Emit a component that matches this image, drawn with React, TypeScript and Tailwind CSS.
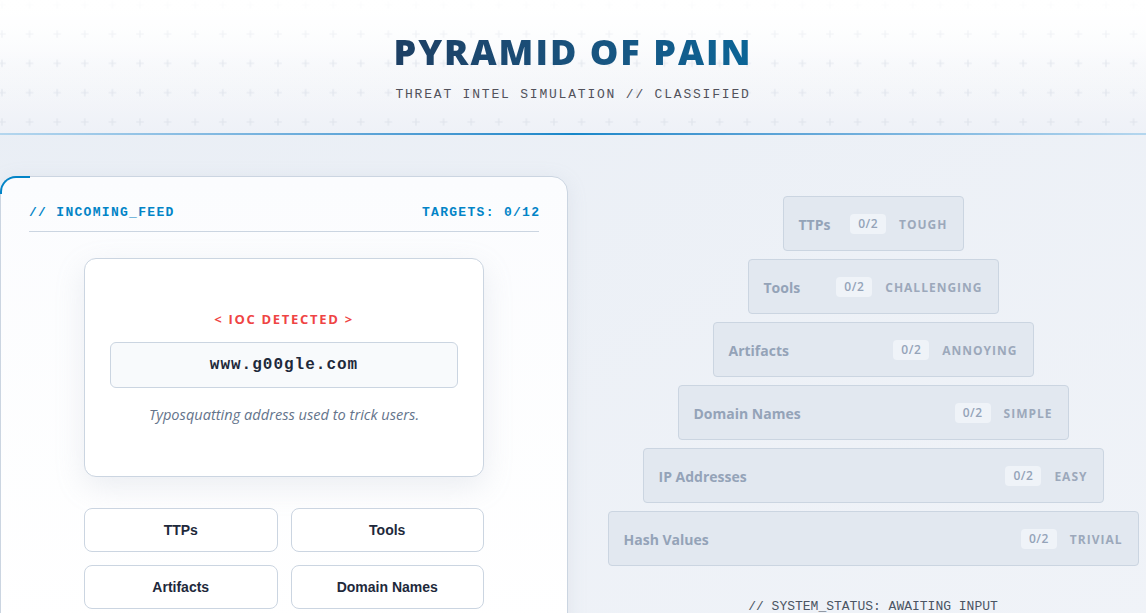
const tiers = [
  { name: "TTPs", level: "TOUGH", width: "w-[181px]" },
  { name: "Tools", level: "CHALLENGING", width: "w-[251px]" },
  { name: "Artifacts", level: "ANNOYING", width: "w-[321px]" },
  { name: "Domain Names", level: "SIMPLE", width: "w-[391px]" },
  { name: "IP Addresses", level: "EASY", width: "w-[461px]" },
  { name: "Hash Values", level: "TRIVIAL", width: "w-[531px]" },
];

const choices = ["TTPs", "Tools", "Artifacts", "Domain Names"];

const mono = "font-['Liberation_Mono','Courier_New',monospace]";

function HeaderPattern() {
  return (
    <svg aria-hidden className="pointer-events-none absolute inset-0 h-full w-full">
      <defs>
        <pattern id="plus" x="-11.8" y="-9.9" width="27.6" height="29.3" patternUnits="userSpaceOnUse">
          <path d="M13.8 10.9v7.5M10.05 14.65h7.5" stroke="#dfe4ec" strokeWidth="1.2" />
        </pattern>
        <linearGradient id="fade" x1="0" y1="0" x2="0" y2="1">
          <stop offset="0" stopColor="#ffffff" stopOpacity="0.95" />
          <stop offset="0.5" stopColor="#ffffff" stopOpacity="0.1" />
          <stop offset="1" stopColor="#ffffff" stopOpacity="0" />
        </linearGradient>
      </defs>
      <rect width="100%" height="100%" fill="url(#plus)" />
      <rect width="100%" height="100%" fill="url(#fade)" />
    </svg>
  );
}

function Tier({ name, level, width }: { name: string; level: string; width: string }) {
  return (
    <div
      className={`${width} flex h-[55px] items-center justify-between rounded-[4px] border border-[#cbd5e1] bg-[#e2e8f0] px-[15px] pt-[2px]`}
    >
      <span className="text-[14px] font-bold text-[#94a3b8]">{name}</span>
      <div className="flex items-center gap-[13px]">
        <span className="-mt-[2px] flex h-5 items-center rounded-[4px] bg-[#eff3f8] px-[8px] text-[12px] font-semibold tracking-[0.5px] text-[#94a3b8]">
          0/2
        </span>
        <span className="text-[12px] font-bold tracking-[1px] text-[#9ca8bb]">{level}</span>
      </div>
    </div>
  );
}

export default function App() {
  return (
    <div className="min-h-screen bg-gradient-to-br from-[#e9eef5] to-[#f0f3f8] font-['Open_Sans','Noto_Sans',sans-serif] text-[#1e293b]">
      <header className="relative h-[135px] overflow-hidden bg-gradient-to-b from-white to-[#eef1f7]">
        <HeaderPattern />
        <div className="relative flex flex-col items-center pt-[34px]">
          <h1 className="bg-gradient-to-r from-[#1d3f63] to-[#0a6597] bg-clip-text text-[36px] leading-none font-extrabold tracking-[2px] text-transparent">
            PYRAMID OF PAIN
          </h1>
          <p className={`${mono} mt-[17px] text-[13px] leading-4 tracking-[1.8px] text-[#52525b]`}>
            THREAT INTEL SIMULATION // CLASSIFIED
          </p>
        </div>
        <div className="absolute bottom-0 left-0 h-[2px] w-full bg-gradient-to-r from-[#b4d6ee] via-[#1687c9] to-[#b4d6ee]" />
      </header>

      <main className="grid grid-cols-[568px_1fr]">
        <section className="pt-[41px]">
          <div className="relative h-[460px] rounded-t-2xl border border-[#cbd5e1] bg-gradient-to-b from-[#fbfcfe] to-white px-[28px] pt-[28px] shadow-[0_4px_20px_rgba(148,163,184,0.15)]">
            <div className="absolute -top-px -left-px h-[18px] w-[30px] rounded-tl-2xl border-t-2 border-l-2 border-[#0284c7]" />
            <div
              className={`${mono} flex items-center justify-between border-b border-[#cbd5e1] pb-[10px] text-[13px] leading-4 font-bold tracking-[1.3px] text-[#0284c7]`}
            >
              <span>// INCOMING_FEED</span>
              <span className="-mr-[1.3px]">TARGETS: 0/12</span>
            </div>

            <div className="mx-auto mt-[26px] flex h-[219px] w-[400px] flex-col items-center justify-center rounded-xl border border-[#cbd5e1] bg-white px-[25px] shadow-[0_10px_30px_rgba(148,163,184,0.18)]">
              <p className="text-[13px] leading-4 font-bold tracking-[1.7px] text-[#ef4444]">&lt; IOC DETECTED &gt;</p>
              <div className="mt-[15px] flex h-[46px] w-full items-center justify-center rounded-md border border-[#cbd5e1] bg-[#f8fafc]">
                <span className={`${mono} text-[16px] font-bold tracking-[1px] text-[#1e293b]`}>www.g00gle.com</span>
              </div>
              <p className="mt-[16px] text-[14.6px] leading-5 text-[#64748b] italic">
                Typosquatting address used to trick users.
              </p>
            </div>

            <div className="mx-auto mt-[31px] grid w-[400px] grid-cols-2 gap-[13px]">
              {choices.map((c) => (
                <button
                  key={c}
                  className="h-[44px] rounded-lg border border-[#cbd5e1] bg-white font-['Liberation_Sans',Arial,sans-serif] text-[14px] font-bold text-[#1e293b]"
                >
                  {c}
                </button>
              ))}
            </div>
          </div>
        </section>

        <section className="flex flex-col items-center pt-[61px] pl-[32px]">
          <div className="flex flex-col items-center gap-2">
            {tiers.map((t) => (
              <Tier key={t.name} {...t} />
            ))}
          </div>
          <p className={`${mono} mt-[33px] text-[13px] leading-4 text-[#4b5563]`}>
            // SYSTEM_STATUS: AWAITING INPUT
          </p>
        </section>
      </main>
    </div>
  );
}
